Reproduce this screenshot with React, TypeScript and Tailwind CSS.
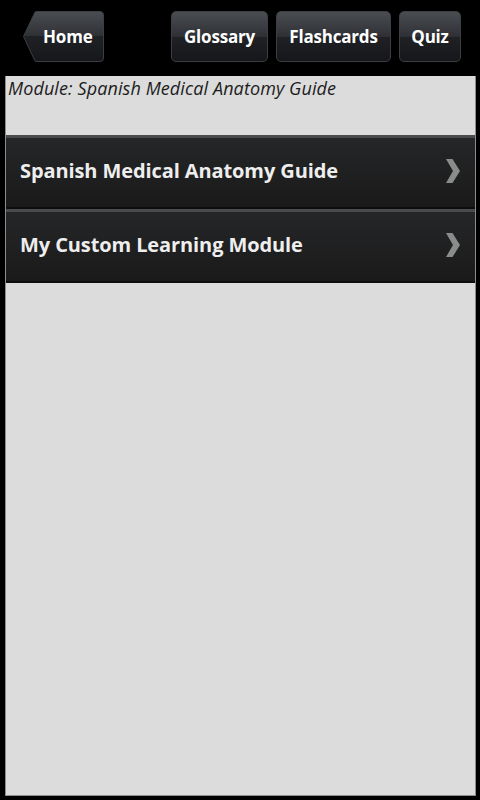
const tabs = [
  { label: "Glossary", w: "w-[97px]" },
  { label: "Flashcards", w: "w-[115px]" },
  { label: "Quiz", w: "w-[62px]" },
];

const modules = ["Spanish Medical Anatomy Guide", "My Custom Learning Module"];

function Chevron() {
  return (
    <svg width="16" height="26" viewBox="0 0 16 26" className="shrink-0">
      <path d="M1 1 L7.5 1 L15 13 L7.5 25 L1 25 L8 13 Z" fill="#8a8c8c" />
    </svg>
  );
}

export default function App() {
  return (
    <div
      className="w-[480px] h-[800px] bg-black flex flex-col"
      style={{ fontFamily: '"Open Sans", "Noto Sans", sans-serif' }}
    >
      <div className="h-[76px] flex items-start pt-[11px] pl-[23px] pr-[19px]">
        <div className="relative h-[51px] w-[81px] flex items-center">
          <svg width="81" height="51" viewBox="0 0 81 51" className="absolute inset-0">
            <defs>
              <linearGradient id="bk" x1="0" y1="0" x2="0" y2="1">
                <stop offset="0" stopColor="#4a4d52" />
                <stop offset="0.5" stopColor="#2e3035" />
                <stop offset="0.5" stopColor="#1f2125" />
                <stop offset="1" stopColor="#16171a" />
              </linearGradient>
            </defs>
            <path
              d="M0.5 25.5 L12 1 Q12.5 0.5 14 0.5 L77 0.5 Q80.5 0.5 80.5 4 L80.5 47 Q80.5 50.5 77 50.5 L14 50.5 Q12.5 50.5 12 50 Z"
              fill="url(#bk)"
              stroke="#3c3e42"
            />
          </svg>
          <span className="relative ml-[20px] text-white font-bold text-[17px] tracking-[-0.2px]">
            Home
          </span>
        </div>
        <div className="flex-1" />
        <div className="flex gap-[8px]">
          {tabs.map((t) => (
            <div
              key={t.label}
              className={`${t.w} h-[51px] rounded-[5px] border border-[#3c3e42] flex items-center justify-center bg-[linear-gradient(to_bottom,#4a4d52_0%,#2e3035_50%,#1f2125_50%,#16171a_100%)]`}
            >
              <span className="text-white font-bold text-[17px] tracking-[-0.2px]">
                {t.label}
              </span>
            </div>
          ))}
        </div>
      </div>
      <div className="mx-[5px] mr-[4px] mb-[4px] flex-1 bg-[#dcdcdc] border-x border-b border-[#8d8d8d] flex flex-col">
        <div className="h-[59px] px-[2px] pt-[1px]">
          <span className="italic text-[18px] text-[#1c1c1c] leading-[22px] tracking-[0.1px]">
            Module: Spanish Medical Anatomy Guide
          </span>
        </div>
        {modules.map((m) => (
          <div
            key={m}
            className="h-[74px] bg-[linear-gradient(to_bottom,#252627,#1a1a1b)] border-t-[3px] border-t-[#4a4b4c] border-b-[2px] border-b-[#0e0e0e] flex items-center pl-[14px] pr-[14px] pb-[3px]"
          >
            <span className="flex-1 text-[#eeeeee] font-bold text-[20px] tracking-[-0.1px]">
              {m}
            </span>
            <Chevron />
          </div>
        ))}
      </div>
    </div>
  );
}
